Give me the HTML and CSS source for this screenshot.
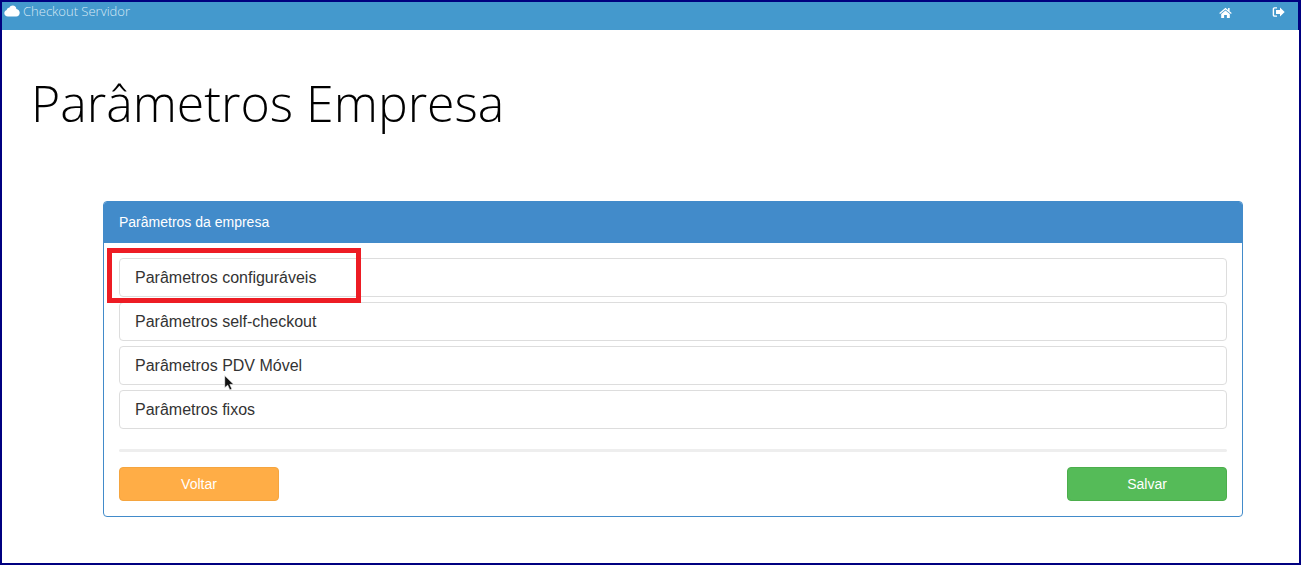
FILE: index.html
```html
<!DOCTYPE html>
<html lang="pt">
<head>
<meta charset="utf-8">
<title>Parâmetros Empresa</title>
<link rel="stylesheet" href="styles.css">
</head>
<body>
<div class="frame">
  <header class="navbar">
    <div class="brand">
      <svg class="cloud" viewBox="0 0 16 12" width="16" height="12"><path fill="#fff" d="M4 11.500C1.800 11.500.3 10.100.3 8.200c0-1.600 1-2.800 2.400-3.200C2.900 3.400 4 2.400 5.300 2.700 6 1.300 7.200.5 8.700.5c2 0 3.600 1.500 3.700 3.500 1.900.2 3.300 1.800 3.300 3.800 0 2.100-1.500 3.700-3.500 3.700z"/></svg>
      <span>Checkout Servidor</span>
    </div>
    <nav class="nav-icons">
      <svg viewBox="0 0 14 12" width="13" height="11"><path fill="#fff" d="M7 .8.2 6.500l.8 1L7 2.600l6 4.900.8-1-2.300-1.900V1.200H9.800v2L7 .8zM2.300 7.500V12h3.200V8.800h3V12h3.200V7.500L7 3.700z"/></svg>
      <svg viewBox="0 0 14 12" width="14" height="12"><path fill="#fff" d="M5 1.200H2.500C1.400 1.200.7 2 .7 3v6c0 1 .7 1.800 1.800 1.800H5V9.500H2.600c-.3 0-.5-.2-.5-.5V3c0-.3.2-.5.5-.5H5z"/><path fill="#fff" d="M8 1.500 12.700 6 8 10.500V8H4V4h4z"/></svg>
    </nav>
  </header>
  <main class="content">
    <h1 class="title">Parâmetros Empresa</h1>
    <section class="panel">
      <div class="panel-heading">Parâmetros da empresa</div>
      <div class="panel-body">
        <ul class="list">
          <li class="list-item">Parâmetros configuráveis</li>
          <li class="list-item">Parâmetros self-checkout</li>
          <li class="list-item">Parâmetros PDV Móvel</li>
          <li class="list-item">Parâmetros fixos</li>
        </ul>
        <hr class="divider">
        <div class="actions">
          <button class="btn btn-back" type="button">Voltar</button>
          <button class="btn btn-save" type="button">Salvar</button>
        </div>
      </div>
    </section>
  </main>
  <div class="highlight"></div>
  <svg class="cursor" viewBox="0 0 10 15" width="11" height="16"><path fill="#111" stroke="#fff" stroke-width=".6" d="M.5.5v11.500l2.800-2.500 2 4.500 2-.9-2-4.300h3.700z"/></svg>
</div>
</body>
</html>
```
FILE: styles.css
```css
* { box-sizing: border-box; }
html, body { margin: 0; padding: 0; background: #fff; }
.frame {
  position: relative;
  width: 1301px;
  height: 565px;
  border: 2px solid #000080;
  overflow: hidden;
  background: #fff;
  font-family: "Liberation Sans", Arial, sans-serif;
}
.navbar {
  display: flex;
  justify-content: space-between;
  height: 28px;
  border-right: 1px solid #000080;
  background: #4499cd;
  color: #d5e8f4;
}
.brand {
  display: flex;
  align-items: flex-start;
  gap: 3px;
  padding: 2px 0 0 2px;
  font-family: "Open Sans", sans-serif;
  font-size: 13px;
  font-weight: 300;
  line-height: 14px;
}
.cloud { margin-top: 1px; }
.nav-icons {
  display: flex;
  gap: 40px;
  padding: 4px 12px 0 0;
}
.nav-icons svg:first-child { margin-top: 1px; }
.content { display: block; }
.title {
  margin: 41px 0 0 29px;
  height: 65px;
  font-family: "Open Sans", sans-serif;
  font-weight: 300;
  font-size: 50px;
  line-height: 65px;
  color: #000;
}
.panel {
  margin: 65px 0 0 101px;
  width: 1140px;
  height: 316px;
  border: 1px solid #428bca;
  border-radius: 4px;
  overflow: hidden;
}
.panel-heading {
  height: 41px;
  padding: 0 15px;
  background: #428bca;
  color: #fff;
  font-size: 14px;
  line-height: 41px;
}
.panel-body { padding: 15px 15px 0; }
.list {
  display: flex;
  flex-direction: column;
  gap: 5px;
  margin: 0;
  padding: 0;
  list-style: none;
}
.list-item {
  height: 39px;
  padding: 0 15px;
  border: 1px solid #ddd;
  border-radius: 4px;
  color: #333;
  font-size: 16px;
  line-height: 37px;
}
.divider {
  height: 3px;
  margin: 20px 0 15px;
  border: 0;
  border-radius: 2px;
  background: #eee;
}
.actions { display: flex; justify-content: space-between; }
.btn {
  width: 160px;
  height: 34px;
  padding: 0;
  border: 1px solid transparent;
  border-radius: 4px;
  color: #fff;
  font-family: inherit;
  font-size: 14px;
}
.btn-back { background: #ffad46; border-color: #f5a53f; }
.btn-save { background: #55bb58; border-color: #4cae4c; }
.highlight {
  position: absolute;
  left: 105px;
  top: 246px;
  width: 254px;
  height: 55px;
  border: 5px solid #ed1c24;
}
.cursor {
  position: absolute;
  left: 222px;
  top: 373px;
}
```
